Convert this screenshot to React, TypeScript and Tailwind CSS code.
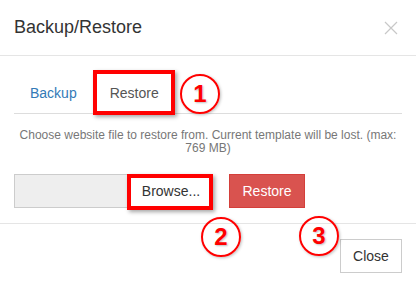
import React from "react";

function Circle({ n, className }: { n: string; className: string }) {
  return (
    <div
      className={
        "absolute w-[40px] h-[40px] rounded-full border-2 border-[#f00] flex items-center justify-center text-[#f00] font-bold text-[24px] leading-none [text-shadow:1px_1px_2px_rgba(0,0,0,0.25)] shadow-[1px_1px_3px_rgba(0,0,0,0.25)] " +
        className
      }
    >
      {n}
    </div>
  );
}

export default function App() {
  return (
    <div className="relative w-[416px] h-[286px] bg-white overflow-hidden font-['Liberation_Sans',Arial,sans-serif] text-[#333]">
      {/* header */}
      <div className="flex items-start justify-between pl-[14px] pr-[18px] pt-[14px] pb-[15px] border-b border-[#e5e5e5]">
        <div className="text-[18px] leading-[26px] text-[#333]">Backup/Restore</div>
        <svg width="14" height="14" viewBox="0 0 14 14" className="mt-[7px]">
          <path d="M1 1 L13 13 M13 1 L1 13" stroke="#c8c8c8" strokeWidth="1.2" />
        </svg>
      </div>

      {/* body */}
      <div className="px-[14px] pt-[17px]">
        <div className="flex border-b border-[#ddd] text-[14px] leading-[20px]">
          <div className="px-[16px] py-[10px] text-[#337ab7]">Backup</div>
          <div className="px-[15px] py-[10px] text-[#555] ml-[2px]">Restore</div>
        </div>
        <div className="mt-[15px] text-center text-[12px] leading-[13px] text-[#777] px-[4px]">
          Choose website file to restore from. Current template will be lost. (max:
          <br />
          769 MB)
        </div>
        <div className="mt-[19px] flex items-center">
          <div className="w-[114px] h-[34px] bg-[#eee] border border-[#ccc]" />
          <div className="w-[86px] h-[34px] flex items-center justify-center bg-white text-[14px] text-[#333]">
            Browse...
          </div>
          <div className="ml-[15px] w-[76px] h-[34px] flex items-center justify-center bg-[#d9534f] border border-[#d43f3a] text-white text-[14px]">
            Restore
          </div>
        </div>
      </div>

      {/* footer */}
      <div className="mt-[15px] border-t border-[#e5e5e5] flex justify-end pr-[14px] pt-[15px]">
        <div className="w-[62px] h-[34px] flex items-center justify-center border border-[#ccc] bg-white text-[14px] text-[#333]">
          Close
        </div>
      </div>

      {/* annotations */}
      <div className="absolute left-[93px] top-[70px] w-[82px] h-[45px] border-[4px] border-[#f00] shadow-[2px_2px_4px_rgba(0,0,0,0.35)]" />
      <div className="absolute left-[127px] top-[174px] w-[86px] h-[36px] border-[4px] border-[#f00] shadow-[2px_2px_4px_rgba(0,0,0,0.35)]" />
      <Circle n="1" className="left-[180px] top-[74px]" />
      <Circle n="2" className="left-[201px] top-[217px]" />
      <Circle n="3" className="left-[299px] top-[216px]" />
    </div>
  );
}
